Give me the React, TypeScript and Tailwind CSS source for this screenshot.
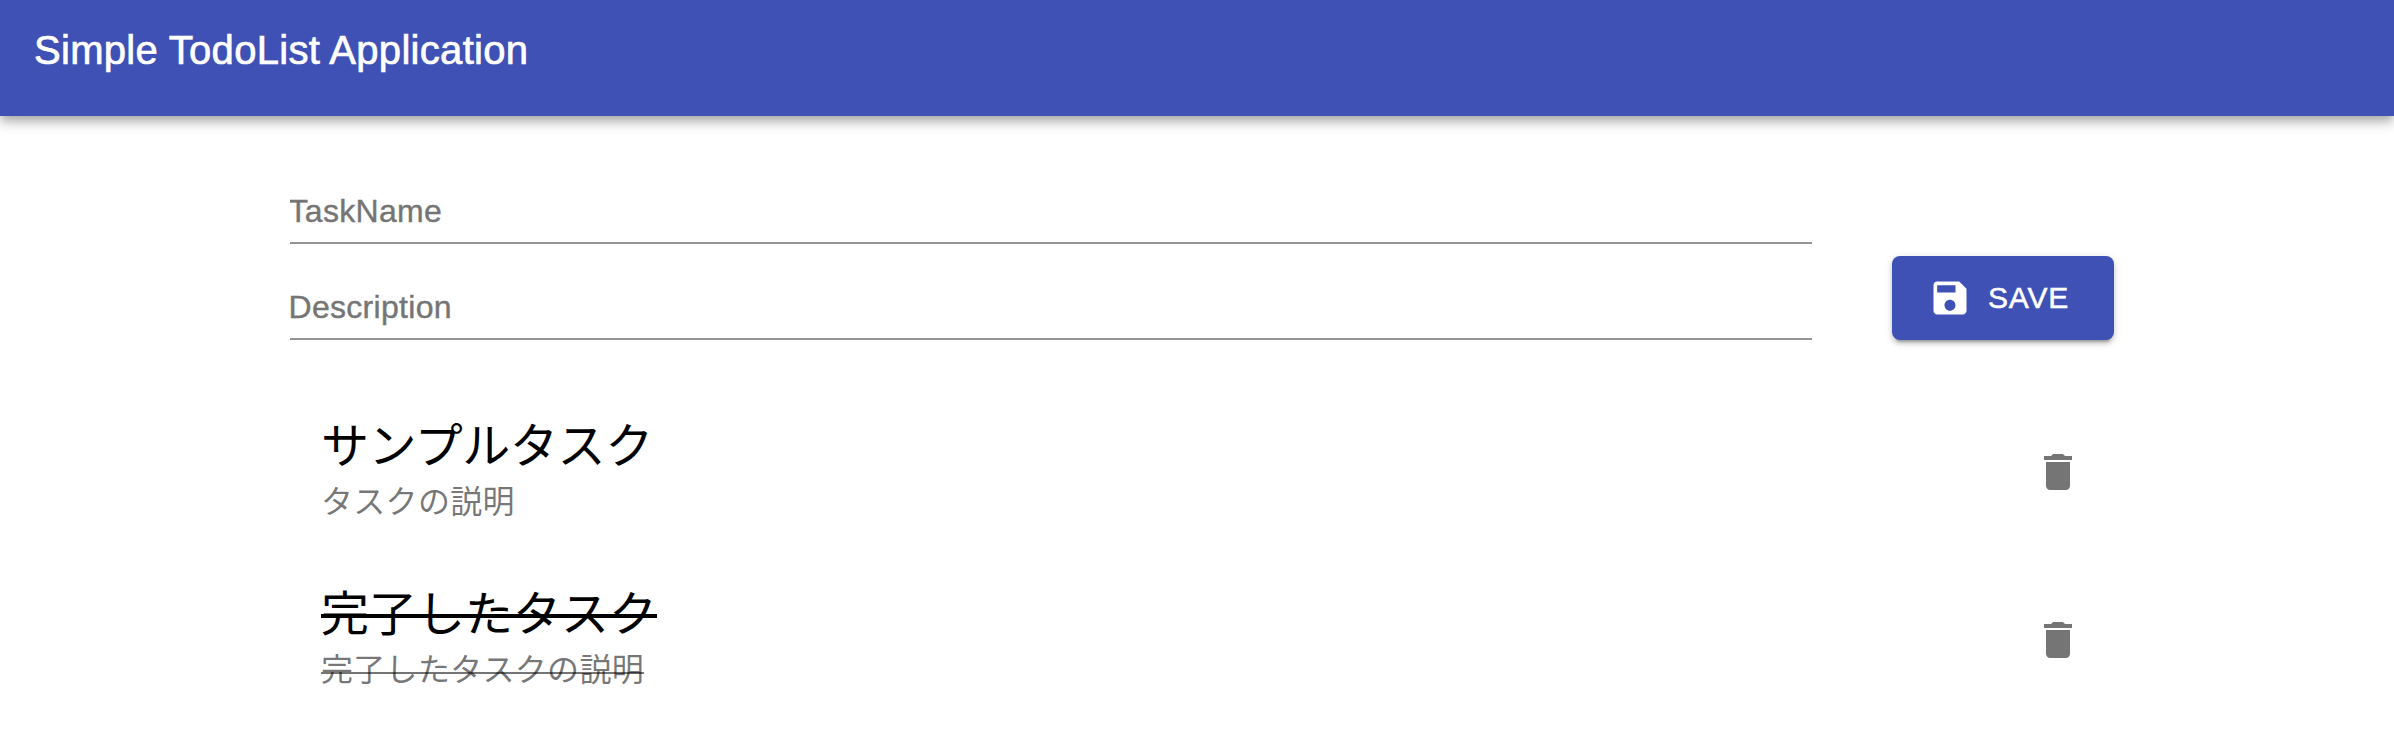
import React from "react";

type Task = { name: string; description: string; done: boolean };

const tasks: Task[] = [
  { name: "サンプルタスク", description: "タスクの説明", done: false },
  { name: "完了したタスク", description: "完了したタスクの説明", done: true },
];

function SaveIcon() {
  return (
    <svg viewBox="0 0 24 24" className="-ml-2 mr-4 size-11 fill-current" aria-hidden="true">
      <path d="M17 3H5c-1.11 0-2 .9-2 2v14c0 1.1.89 2 2 2h14c1.1 0 2-.9 2-2V7l-4-4zm-5 16c-1.66 0-3-1.34-3-3s1.34-3 3-3 3 1.34 3 3-1.34 3-3 3zm3-10H5V5h10v4z" />
    </svg>
  );
}

function DeleteIcon() {
  return (
    <svg viewBox="0 0 24 24" className="size-12 fill-current" aria-hidden="true">
      <path d="M6 19c0 1.1.9 2 2 2h8c1.1 0 2-.9 2-2V7H6v12zM19 4h-3.5l-1-1h-5l-1 1H5v2h14V4z" />
    </svg>
  );
}

function Field({ label }: { label: string }) {
  return (
    <input
      placeholder={label}
      aria-label={label}
      className="h-16 w-full border-b-2 border-black/42 bg-transparent indent-[-1.5px] text-[32px] leading-[38px] tracking-[0.00938em] outline-none placeholder:text-[#757575] [-webkit-text-stroke:0.4px_#757575]"
    />
  );
}

// The strike line is a pseudo-element so that it sits at a fixed height over the glyphs.
function TaskText({ task }: { task: Task }) {
  if (task.done) {
    return (
      <div className="mb-[3px] flex flex-col items-start">
        <p className="relative text-[48px] leading-[63px] text-black after:absolute after:inset-x-0 after:top-[31px] after:h-1 after:bg-black">
          {task.name}
        </p>
        <p className="relative text-[32px] leading-[48px] tracking-[0.00938em] text-black/54 after:absolute after:inset-x-0 after:top-[26px] after:h-0.5 after:bg-black/54">
          {task.description}
        </p>
      </div>
    );
  }
  return (
    <div className="mb-[3px] flex flex-col items-start">
      <p className="text-[48px] leading-[63px] tracking-[-0.4px] text-black">{task.name}</p>
      <p className="text-[32px] leading-[48px] tracking-[0.00938em] text-black/54">{task.description}</p>
    </div>
  );
}

function TaskRow({ task }: { task: Task }) {
  return (
    <li className="flex h-[168px] items-center justify-between pr-8 pl-[31px]">
      <TaskText task={task} />
      <button type="button" aria-label="delete" className="text-black/54">
        <DeleteIcon />
      </button>
    </li>
  );
}

export default function App() {
  return (
    <div className="h-[744px] overflow-hidden bg-white font-['Liberation_Sans','Noto_Sans_CJK_JP',sans-serif]">
      <header className="h-[116px] bg-[#3f51b5] px-[34px] pt-[18px] text-white shadow-[0_4px_8px_-2px_rgba(0,0,0,0.2),0_8px_10px_0_rgba(0,0,0,0.14),0_2px_20px_0_rgba(0,0,0,0.12)]">
        <h1 className="text-[40px] leading-[64px] tracking-[0.0075em] [-webkit-text-stroke:0.7px_white]">
          Simple TodoList Application
        </h1>
      </header>
      <main className="mr-[280px] ml-[290px] pt-16">
        <form className="flex items-end">
          <div className="flex w-[1522px] flex-col gap-8">
            <Field label="TaskName" />
            <Field label="Description" />
          </div>
          <button
            type="button"
            className="ml-20 flex h-[84px] w-[222px] items-center rounded-lg bg-[#3f51b5] px-11 text-[30px] leading-[52px] tracking-[0.02857em] text-white shadow-[0_6px_2px_-4px_rgba(0,0,0,0.2),0_4px_4px_0_rgba(0,0,0,0.14),0_2px_10px_0_rgba(0,0,0,0.12)]"
          >
            <SaveIcon />
            <span className="[-webkit-text-stroke:0.5px_white]">SAVE</span>
          </button>
        </form>
        <ul className="mt-12 w-[1824px]">
          {tasks.map((task) => (
            <TaskRow key={task.name} task={task} />
          ))}
        </ul>
      </main>
    </div>
  );
}
